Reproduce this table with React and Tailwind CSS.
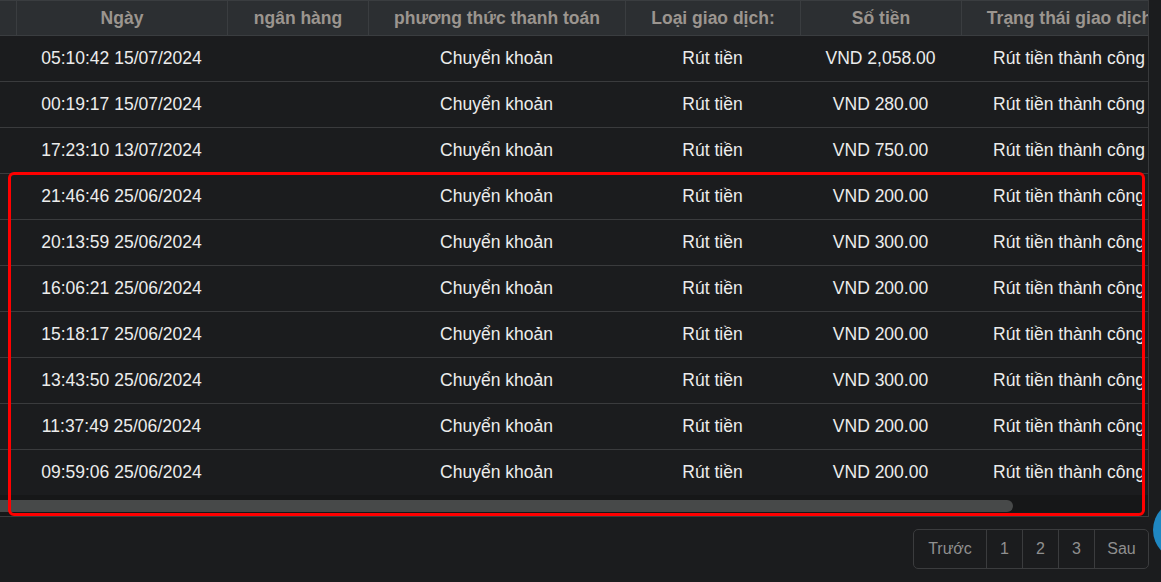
import React from "react";

const rows = [
  ["05:10:42 15/07/2024", "VND 2,058.00"],
  ["00:19:17 15/07/2024", "VND 280.00"],
  ["17:23:10 13/07/2024", "VND 750.00"],
  ["21:46:46 25/06/2024", "VND 200.00"],
  ["20:13:59 25/06/2024", "VND 300.00"],
  ["16:06:21 25/06/2024", "VND 200.00"],
  ["15:18:17 25/06/2024", "VND 200.00"],
  ["13:43:50 25/06/2024", "VND 300.00"],
  ["11:37:49 25/06/2024", "VND 200.00"],
  ["09:59:06 25/06/2024", "VND 200.00"],
];

const grid = "grid grid-cols-[16px_211px_141px_257px_175px_161px_216px_150px] w-[1327px]";

export default function App() {
  return (
    <div
      className="relative w-[1161px] h-[582px] overflow-hidden bg-[#1b1c1e] text-[16px]"
      style={{ fontFamily: '"Liberation Sans", Arial, sans-serif' }}
    >
      <div className="w-[1149px] overflow-hidden border-r border-[#38393b] text-[17.5px]">
        {/* header */}
        <div className={`${grid} h-[36px] bg-[#2c2f32] border-t border-b border-[#3a3d40] font-bold text-[#9b958f]`}>
          <div />
          <div className="flex items-center justify-center border-l border-[#3a3d40]">Ngày</div>
          <div className="flex items-center justify-center border-l border-[#3a3d40]">ngân hàng</div>
          <div className="flex items-center justify-center border-l border-[#3a3d40] whitespace-nowrap">phương thức thanh toán</div>
          <div className="flex items-center justify-center border-l border-[#3a3d40]">Loại giao dịch:</div>
          <div className="flex items-center justify-center border-l border-[#3a3d40]">Số tiền</div>
          <div className="flex items-center justify-center border-l border-[#3a3d40] whitespace-nowrap">Trạng thái giao dịch</div>
          <div className="border-l border-[#3a3d40]" />
        </div>
        {/* body */}
        {rows.map((r, i) => (
          <div
            key={i}
            className={`${grid} text-[#ececec] ${i > 0 ? "h-[46px] border-t border-[#3a3b3d]" : "h-[45px]"}`}
          >
            <div />
            <div className="flex items-center justify-center whitespace-nowrap">{r[0]}</div>
            <div />
            <div className="flex items-center justify-center whitespace-nowrap">Chuyển khoản</div>
            <div className="flex items-center justify-center whitespace-nowrap">Rút tiền</div>
            <div className="flex items-center justify-center whitespace-nowrap">{r[1]}</div>
            <div className="flex items-center justify-center whitespace-nowrap">Rút tiền thành công</div>
            <div />
          </div>
        ))}
        {/* scrollbar */}
        <div className="h-[21px] bg-[#161718] pt-[5px]">
          <div className="h-[12px] w-[1013px] rounded-r-full bg-[#474949]" />
        </div>
        <div className="h-px bg-[#3a3b3d]" />
      </div>

      {/* pagination */}
      <div className="w-[1149px] flex justify-end mt-[12px]">
        <div className="flex h-[40px] rounded-[5px] border border-[#3b3c3e] text-[#8f8f8f]">
          <div className="w-[72px] flex items-center justify-center">Trước</div>
          <div className="w-[36px] flex items-center justify-center border-l border-[#3b3c3e]">1</div>
          <div className="w-[36px] flex items-center justify-center border-l border-[#3b3c3e]">2</div>
          <div className="w-[36px] flex items-center justify-center border-l border-[#3b3c3e]">3</div>
          <div className="w-[54px] flex items-center justify-center border-l border-[#3b3c3e]">Sau</div>
        </div>
      </div>

      {/* highlight annotation */}
      <div className="absolute left-[8px] top-[172px] w-[1137px] h-[344px] border-[3px] border-[#ff0000] rounded-[6px] pointer-events-none" />

      {/* floating circle */}
      <div className="absolute left-[1153px] top-[500px] w-[60px] h-[60px] rounded-full bg-[#1f87c2]" />
    </div>
  );
}
